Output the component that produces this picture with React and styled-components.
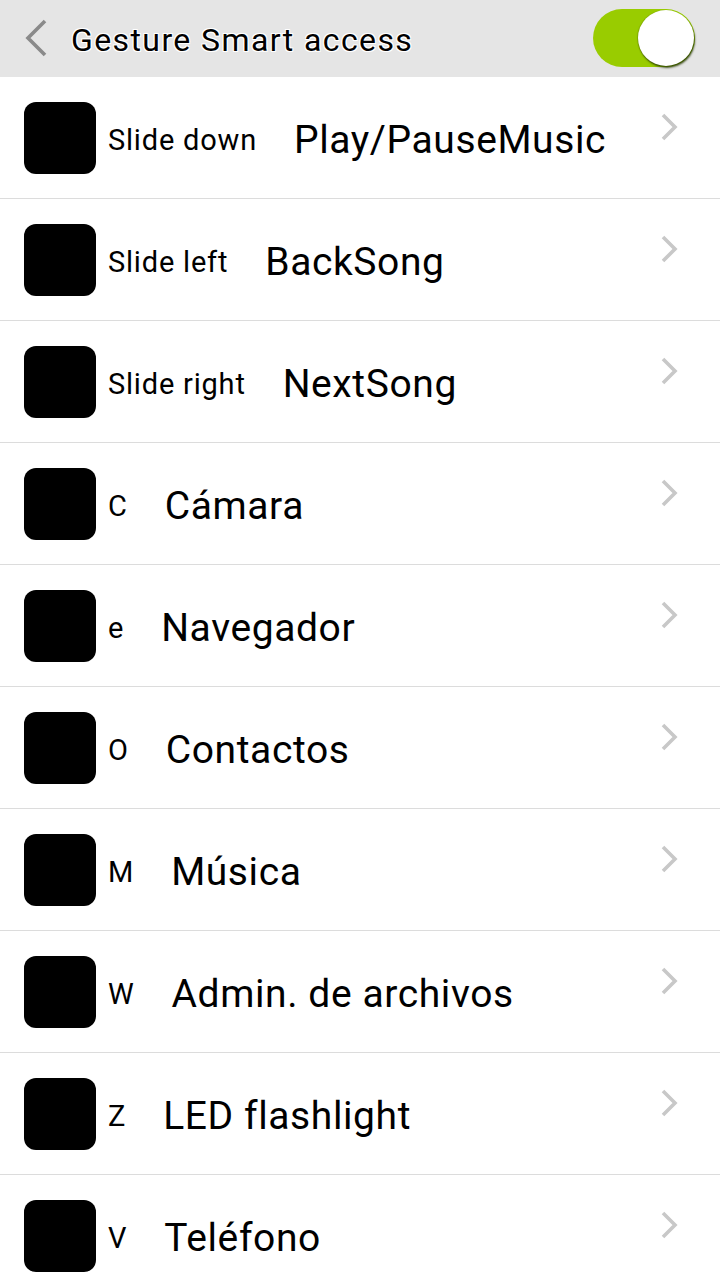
import React from "react";
import styled, { createGlobalStyle } from "styled-components";

const GlobalStyle = createGlobalStyle`
  html, body {
    margin: 0;
    padding: 0;
    background: #ffffff;
    font-family: Roboto, "Noto Sans", "Liberation Sans", sans-serif;
  }
  * { box-sizing: border-box; }
`;

const items = [
  { gesture: "Slide down", action: "Play/PauseMusic" },
  { gesture: "Slide left", action: "BackSong" },
  { gesture: "Slide right", action: "NextSong" },
  { gesture: "C", action: "Cámara" },
  { gesture: "e", action: "Navegador" },
  { gesture: "O", action: "Contactos" },
  { gesture: "M", action: "Música" },
  { gesture: "W", action: "Admin. de archivos" },
  { gesture: "Z", action: "LED flashlight" },
  { gesture: "V", action: "Teléfono" },
];

function App() {
  return (
    <Page>
      <GlobalStyle />
      <Header>
        <BackButton>
          <svg width="24" height="38" viewBox="0 0 24 38">
            <path d="M21 2 L4 19 L21 36" fill="none" stroke="#8a8a8a" strokeWidth="3.6" />
          </svg>
        </BackButton>
        <Title>Gesture Smart access</Title>
        <Toggle>
          <Knob />
        </Toggle>
      </Header>
      <List>
        {items.map((item) => (
          <Row key={item.gesture}>
            <GestureIcon />
            <Gesture>{item.gesture}</Gesture>
            <Action>{item.action}</Action>
            <Chevron>
              <svg width="20" height="28" viewBox="0 0 20 28">
                <path d="M3 2 L15 14 L3 26" fill="none" stroke="#c8c8c8" strokeWidth="3.6" />
              </svg>
            </Chevron>
          </Row>
        ))}
      </List>
    </Page>
  );
}

const Page = styled.div`
  width: 720px;
  height: 1280px;
  overflow: hidden;
  background: #fff;
`;

const Header = styled.div`
  height: 77px;
  background: #e5e5e5;
  display: flex;
  align-items: center;
  padding: 0 24px 0 24px;
`;

const BackButton = styled.div`
  width: 24px;
  height: 38px;
  display: flex;
  margin-top: -2px;
`;

const Title = styled.div`
  flex: 1;
  margin-left: 23px;
  margin-top: 3px;
  font-size: 32px;
  letter-spacing: 1.4px;
  color: #000;
  text-shadow: -1px -1px 0 #fff, 1px -1px 0 #fff, -1px 1px 0 #fff, 1px 1px 0 #fff,
    0 0 2px #fff;
`;

const Toggle = styled.div`
  width: 102px;
  height: 58px;
  border-radius: 29px;
  background: #99cc00;
  display: flex;
  align-items: center;
  justify-content: flex-end;
  padding-right: 1px;
  margin-right: 1px;
  margin-top: -1px;
`;

const Knob = styled.div`
  width: 56px;
  height: 56px;
  border-radius: 50%;
  background: #fff;
  box-shadow: 1px 2px 2px rgba(40, 60, 0, 0.85), -1px 0 1px rgba(0, 0, 0, 0.15);
`;

const List = styled.div`
  display: flex;
  flex-direction: column;
`;

const Row = styled.div`
  height: 122px;
  flex-shrink: 0;
  display: flex;
  align-items: center;
  padding: 0 40px 0 24px;
  border-bottom: 1px solid #dcdcdc;
`;

const GestureIcon = styled.div`
  width: 72px;
  height: 72px;
  border-radius: 12px;
  background: #000;
  flex-shrink: 0;
`;

const Gesture = styled.div`
  margin-left: 12px;
  margin-top: 4px;
  font-size: 29px;
  letter-spacing: 0.8px;
  color: #000;
`;

const Action = styled.div`
  flex: 1;
  margin-left: 37px;
  margin-top: 5px;
  font-size: 39px;
  letter-spacing: 0.6px;
  color: #000;
`;

const Chevron = styled.div`
  width: 20px;
  height: 28px;
  display: flex;
  margin-bottom: 22px;
`;

export default App;
